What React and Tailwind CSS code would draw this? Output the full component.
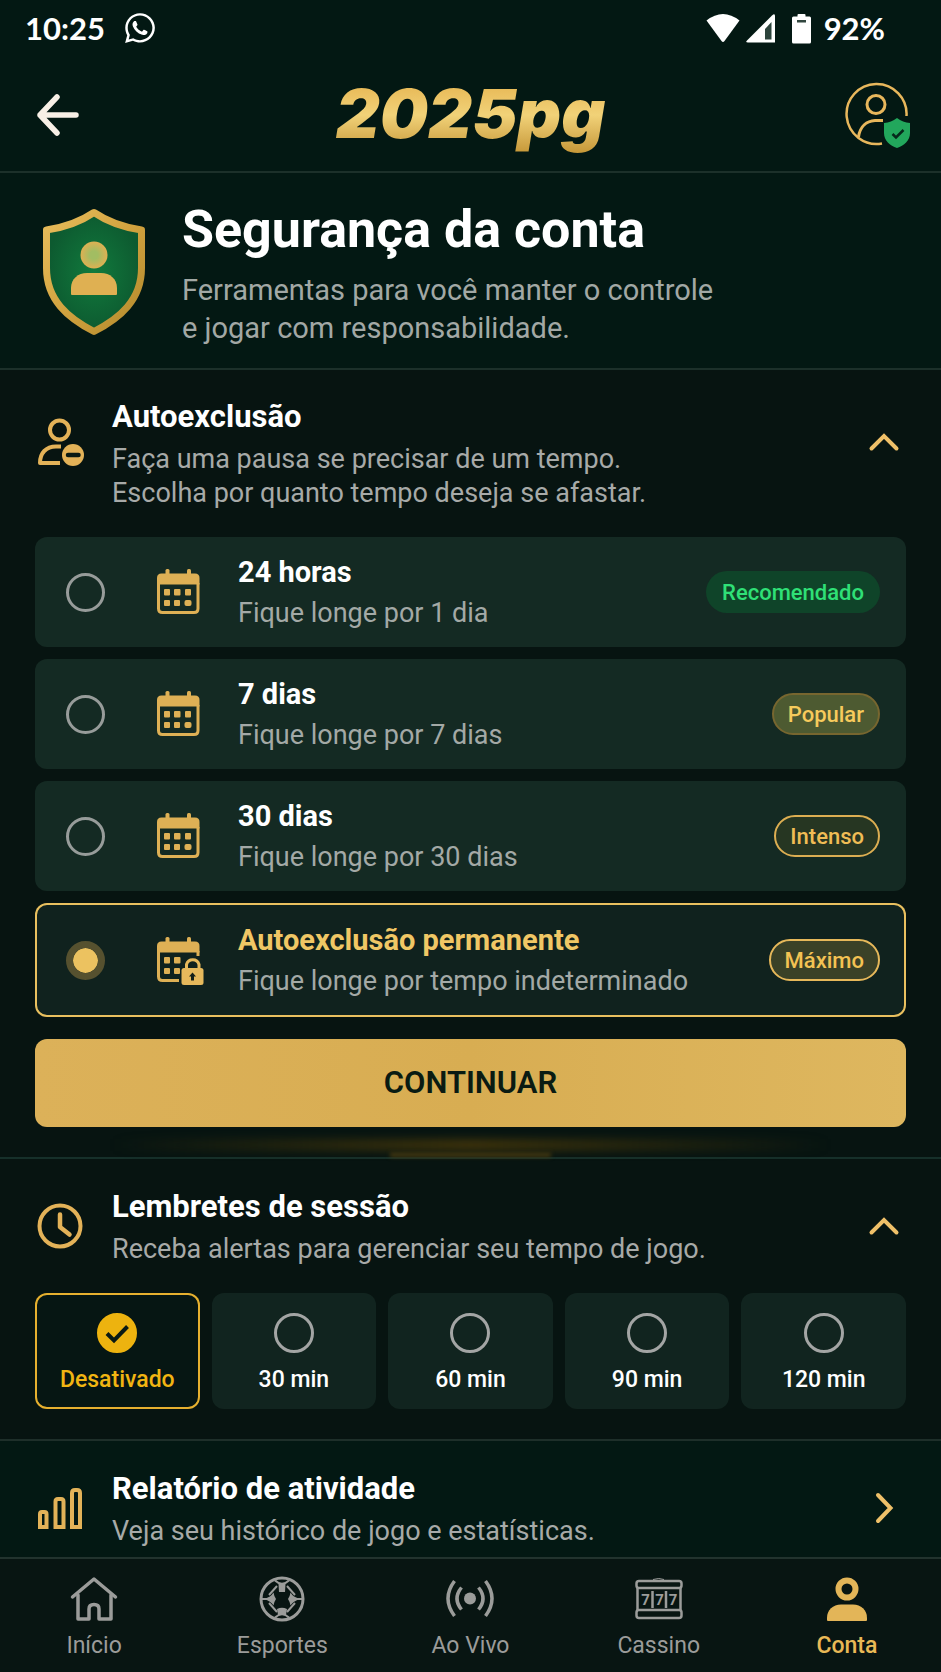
import React, { useState } from "react";
import { FaWhatsapp } from "react-icons/fa";

const exclusionOptions = [
  {
    id: "24h",
    title: "24 horas",
    text: "Fique longe por 1 dia",
    badge: "Recomendado",
    badgeClass: "bg-[#0f4429] text-[#2fe077] px-4"
  },
  {
    id: "7d",
    title: "7 dias",
    text: "Fique longe por 7 dias",
    badge: "Popular",
    badgeClass:
      "bg-[#4d5a31] text-[#f7cb5c] px-[14px] border-2 border-[#77662f]"
  },
  {
    id: "30d",
    title: "30 dias",
    text: "Fique longe por 30 dias",
    badge: "Intenso",
    badgeClass:
      "bg-[#263622] text-[#f0bd55] px-[14px] border-2 border-[#dcae52]"
  },
  {
    id: "permanent",
    title: "Autoexclusão permanente",
    text: "Fique longe por tempo indeterminado",
    badge: "Máximo",
    badgeClass:
      "bg-[#3a4127] text-[#f3c253] px-[14px] border-2 border-[#e6b85a]"
  }
];

const reminders = ["Desativado", "30 min", "60 min", "90 min", "120 min"];

const ShieldIcon = () => (
  <svg className="w-[104px] h-32 shrink-0" viewBox="0 0 104 128" fill="none">
    <defs>
      <linearGradient id="shieldGold" x1="0" y1="0" x2="1" y2="1">
        <stop offset="0" stopColor="#e8bd5c" />
        <stop offset="0.5" stopColor="#d2a33f" />
        <stop offset="1" stopColor="#b28a2c" />
      </linearGradient>
      <radialGradient id="shieldGreen">
        <stop offset="0" stopColor="#117a3d" />
        <stop offset="1" stopColor="#0d5a30" />
      </radialGradient>
      <radialGradient id="shieldHead">
        <stop offset="0.3" stopColor="#a2bd62" />
        <stop offset="1" stopColor="#dfb052" />
      </radialGradient>
    </defs>
    <path
      d="M52 4.500C38 14 22 19.500 4.500 22V60C4.500 92 26 110 52 123.500C78 110 99.500 92 99.500 60V22C82 19.500 66 14 52 4.500Z"
      fill="url(#shieldGreen)"
      stroke="url(#shieldGold)"
      strokeWidth="7"
      strokeLinejoin="round"
    />
    <circle cx="52" cy="47" r="13.500" fill="url(#shieldHead)" />
    <path
      d="M29 86V80C29 71 36 65 45 65H59C68 65 75 71 75 80V86Q75 87 74 87H30Q29 87 29 86Z"
      fill="#dfb052"
    />
  </svg>
);

const AccountIcon = () => (
  <svg className="w-[66px] h-[68px]" viewBox="0 -1 66 68" fill="none">
    <g stroke="#e8b75c" strokeWidth="2.500">
      <path d="M61.500 34A30 30 0 1 0 37 61.500" />
      <circle cx="31" cy="22.500" r="9" strokeWidth="3" />
      <path d="M13.500 55C15 44 22 39 30 38.500H38" strokeWidth="3" />
    </g>
    <path
      d="M52 36C56 39 60 40.500 65 41V51C65 59 59 63.500 52 66C45 63.500 39 59 39 51V41C44 40.500 48 39 52 36Z"
      fill="#22a75c"
    />
    <path d="M47.500 52L51 55.500L58.500 48" stroke="#06281b" strokeWidth="2.500" />
  </svg>
);

const UserMinusIcon = () => (
  <svg className="w-12 h-12" viewBox="0 0 48 48" fill="none">
    <g stroke="#e3b258" strokeWidth="4">
      <circle cx="23.500" cy="12" r="9.500" />
      <path d="M25 28.500H20C10 28.500 4 35 4 45H24" strokeLinejoin="round" />
    </g>
    <circle cx="37" cy="37" r="11" fill="#e3b258" />
    <path d="M32 37H42.500" stroke="#0a1a14" strokeWidth="4.500" strokeLinecap="round" />
  </svg>
);

const ClockIcon = () => (
  <svg className="w-12 h-12" viewBox="0 0 48 48" fill="none">
    <g stroke="#e3b258" strokeWidth="4" strokeLinecap="round" strokeLinejoin="round">
      <circle cx="24" cy="24" r="20.500" />
      <path d="M24 12.500V25L33.500 32.500" strokeWidth="4.500" />
    </g>
  </svg>
);

const ChartIcon = () => (
  <svg className="w-12 h-12" viewBox="0 0 48 48" fill="none">
    <g stroke="#e3b258" strokeWidth="4">
      <path d="M4 43V30Q4 28 6 28H8.500Q10.500 28 10.500 30V43Z" />
      <path d="M19.500 43V17.500Q19.500 15 22 15H25Q27.500 15 27.500 17.500V43Z" />
      <path d="M36 43V9Q36 6 39 6H41Q44 6 44 9V43Z" />
    </g>
  </svg>
);

const CalendarIcon = ({ locked }) => (
  <svg className="w-12 h-[50px] shrink-0" viewBox="0 0 48 50" fill="#deb055">
    <rect x="9.500" y="2" width="4" height="8" rx="1.500" />
    <rect x="31" y="2" width="4" height="8" rx="1.500" />
    <path d="M1 17.500V11Q1 6.500 5.500 6.500H39Q43.500 6.500 43.500 11V17.500Z" />
    <path
      d={
        locked
          ? "M42 16V21M2.500 16V41.500Q2.500 45.500 6.500 45.500H23"
          : "M2.500 16V41.500Q2.500 45.500 6.500 45.500H38Q42 45.500 42 41.500V16"
      }
      fill="none"
      stroke="#deb055"
      strokeWidth="3"
    />
    <rect x="8" y="22" width="6" height="6.500" rx="1" />
    <rect x="18" y="22" width="6.500" height="6.500" rx="1" />
    <rect x="8" y="33" width="6" height="6" rx="1" />
    <rect x="18" y="33" width="6" height="6" rx="1" />
    {locked ? (
      <>
        <path
          d="M30.500 34V29.500A6.500 6.500 0 0 1 43 29.500V34"
          fill="none"
          stroke="#e6b95c"
          strokeWidth="3"
        />
        <rect x="25.500" y="33" width="22" height="17" rx="2.500" fill="#e6b95c" />
        <path d="M36.500 37.500L40 41.500H38V45.500H35V41.500H33Z" fill="#142019" />
      </>
    ) : (
      <>
        <rect x="29" y="22" width="6" height="6.500" rx="1" />
        <rect x="28.500" y="33" width="7" height="6" rx="2" />
      </>
    )}
  </svg>
);

const Chevron = ({ right }) => (
  <svg className="w-9 h-9" viewBox="0 0 36 36" fill="none">
    <path
      d={right ? "M12 5L24.500 18L12 31" : "M5.500 24.500L18 12L30.500 24.500"}
      stroke="#efc069"
      strokeWidth="4"
      strokeLinecap="round"
    />
  </svg>
);

const HomeIcon = () => (
  <svg className="w-12 h-12" viewBox="0 0 48 48" fill="none">
    <g stroke="#9b9c9a" strokeWidth="3.500" strokeLinecap="round" strokeLinejoin="round">
      <path d="M2.500 22L24 4L45.500 22" />
      <path d="M8 20V44H19V34Q19 29.500 24 29.500Q29 29.500 29 34V44H41V20" />
    </g>
  </svg>
);

const BallIcon = () => (
  <svg className="w-12 h-12" viewBox="0 0 48 48" fill="none">
    <circle cx="24" cy="24" r="21" stroke="#9b9c9a" strokeWidth="3" />
    <g stroke="#9b9c9a" strokeWidth="2">
      <path d="M17 5.500Q24 12 31 5.500M17 42.500Q24 36 31 42.500" />
      <path d="M19 11L11 20M29 11L37 20M19 37L11 28M29 37L37 28" />
      <path d="M3.500 24H9M39 24H44.500" />
    </g>
    <g fill="#9b9c9a">
      <path d="M20.500 9H27.500L27 17H21Z" />
      <path d="M6 24Q13 22 15.500 17.500Q16 21 18 24Q16 27 15.500 30.500Q13 26 6 24Z" />
      <path d="M42 24Q35 22 32.500 17.500Q32 21 30 24Q32 27 32.500 30.500Q35 26 42 24Z" />
      <path d="M19 34Q24 31.500 29 34L28 40H20Z" />
    </g>
  </svg>
);

const LiveIcon = () => (
  <svg className="w-12 h-12" viewBox="0 0 48 48" fill="none">
    <circle cx="24" cy="23.500" r="6" fill="#9b9c9a" />
    <g stroke="#9b9c9a" strokeWidth="3.500">
      <path d="M15.500 12.500Q6.500 23.500 15.500 34.500M32.500 12.500Q41.500 23.500 32.500 34.500" />
      <path d="M8.500 6Q-4.500 23.500 8.500 41M39.500 6Q52.500 23.500 39.500 41" />
    </g>
  </svg>
);

const SlotIcon = () => (
  <svg className="w-12 h-12" viewBox="0 0 48 48" fill="none">
    <g stroke="#9b9c9a" strokeWidth="2.500">
      <rect x="1.500" y="6" width="45" height="7" rx="2.500" />
      <path d="M2.500 13V36M45.500 13V36M17.500 16V33M31 16V33" />
      <rect x="1.500" y="35" width="45" height="8" rx="2.500" />
      <path d="M18 4.500Q24 2.500 29 4.500" strokeWidth="1" />
    </g>
    <g
      fill="#9b9c9a"
      fontFamily="Roboto, sans-serif"
      fontWeight="700"
      fontSize="15"
      textAnchor="middle"
    >
      <text x="10.500" y="29.500">7</text>
      <text x="24.500" y="29.500">7</text>
      <text x="38" y="29.500">7</text>
    </g>
  </svg>
);

const AccountNavIcon = () => (
  <svg className="w-12 h-12" viewBox="0 0 48 48" fill="none">
    <circle cx="24" cy="14" r="8.500" stroke="#e3b558" strokeWidth="6" />
    <path
      d="M4 45V43C4 35 10 29.500 18 29.500H30C38 29.500 44 35 44 43V45Q44 46 43 46H5Q4 46 4 45Z"
      fill="#e3b558"
    />
  </svg>
);

const navItems = [
  { label: "Início", icon: HomeIcon },
  { label: "Esportes", icon: BallIcon },
  { label: "Ao Vivo", icon: LiveIcon },
  { label: "Cassino", icon: SlotIcon },
  { label: "Conta", icon: AccountNavIcon, active: true }
];

const StatusBar = () => (
  <div className="flex items-center justify-between h-[58px] pb-0.5 pl-[25px] pr-14 text-white font-[Lato,sans-serif] text-[31px] leading-none font-bold">
    <div className="flex items-center gap-[18px]">
      <span>10:25</span>
      <FaWhatsapp className="w-[34px] h-[34px]" />
    </div>
    <div className="flex items-center gap-3">
      <svg className="w-[106px] h-8" viewBox="0 0 106 32" fill="#fff">
        <path d="M0.500 8.500Q17 -4.500 33.500 8.500L18.500 29Q17 31 15.500 29Z" />
        <path d="M42 30.500Q39 30.500 41 28.500L66 3.500Q69 1 69 4V30.500Z" />
        <path d="M59 17L65.500 10V27.500H59Z" fill="#2c443c" />
        <path d="M86 6Q86 4.500 87.500 4.500H91.500V3Q91.500 2 92.500 2H98.500Q99.500 2 99.500 3V4.500H103.500Q105 4.500 105 6V30Q105 31.500 103.500 31.500H87.500Q86 31.500 86 30Z" />
        <rect x="91" y="8" width="9" height="2.500" fill="#31463f" />
      </svg>
      <span>92%</span>
    </div>
  </div>
);

const SectionHeader = ({ icon, title, children, right, tall }) => {
  const side = tall
    ? "flex items-center shrink-0 h-[90px]"
    : "flex items-center shrink-0 h-[78px]";
  return (
    <button
      type="button"
      className="flex w-full items-start pl-9 pr-[39px] text-left"
    >
      <span className={side}>{icon}</span>
      <span className="ml-7 flex-1">
        <span className="block text-[31px] leading-10 font-bold text-white">
          {title}
        </span>
        <span className="block mt-[5px] text-[27px] leading-[34px] text-[#a7aaa8]">
          {children}
        </span>
      </span>
      <span className={side}>
        <Chevron right={right} />
      </span>
    </button>
  );
};

const ExclusionOption = ({ option, checked, onChange }) => (
  <label
    className={
      checked
        ? "flex items-center pl-[31px] pr-[26px] py-[18px] rounded-xl bg-[#10221e] ring-2 ring-inset ring-[#e9c05f]"
        : "flex items-center pl-[31px] pr-[26px] py-4 rounded-xl bg-[#142a23]"
    }
  >
    <input
      type="radio"
      name="exclusion"
      checked={checked}
      onChange={onChange}
      className="appearance-none w-[39px] h-[39px] shrink-0 rounded-full border-[3px] border-[#979c9a] checked:border-[7px] checked:border-[#56512f] checked:bg-[#ecc260] checked:bg-clip-padding"
    />
    <span className="ml-[51px] mr-[34px]">
      <CalendarIcon locked={option.id === "permanent"} />
    </span>
    <span className="flex-1">
      <span
        className={
          checked
            ? "block text-[29px] leading-[38px] font-bold text-[#f0c765]"
            : "block text-[29px] leading-[38px] font-bold text-white"
        }
      >
        {option.title}
      </span>
      <span className="block mt-1 text-[27px] leading-9 text-[#a3a9a6]">
        {option.text}
      </span>
    </span>
    <span
      className={`flex items-center h-[42px] rounded-full text-[22px] font-medium ${option.badgeClass}`}
    >
      {option.badge}
    </span>
  </label>
);

const ReminderOption = ({ label, checked, onChange }) => (
  <label
    className={
      checked
        ? "flex flex-col items-center pt-5 pb-3 rounded-xl bg-[#061613] ring-2 ring-inset ring-[#e6b02f] text-[#f1b512]"
        : "flex flex-col items-center pt-5 pb-3 rounded-xl bg-[#11241f] text-white"
    }
  >
    <span className="grid">
      <input
        type="radio"
        name="reminder"
        checked={checked}
        onChange={onChange}
        className="appearance-none col-start-1 row-start-1 w-10 h-10 rounded-full border-[3px] border-[#a3a5a4] checked:border-[#edb30f] checked:bg-[#edb30f]"
      />
      {checked && (
        <svg
          className="col-start-1 row-start-1 w-10 h-10 pointer-events-none"
          viewBox="0 0 40 40"
          fill="none"
        >
          <path d="M10 20.500L17 27.500L30.500 13.500" stroke="#0a1a14" strokeWidth="4" />
        </svg>
      )}
    </span>
    <span className="mt-[11px] mb-px text-[23px] leading-8 font-medium">
      {label}
    </span>
  </label>
);

const App = () => {
  const [exclusion, setExclusion] = useState("permanent");
  const [reminder, setReminder] = useState("Desativado");

  return (
    <div className="flex flex-col min-h-screen bg-[#031813] font-[Roboto,sans-serif]">
      <StatusBar />
      <header className="flex items-center justify-between h-[115px] pl-9 pr-[30px] border-b-2 border-[#1c302a]">
        <button type="button" aria-label="Voltar" className="w-[60px]">
          <svg className="w-11 h-11" viewBox="0 0 44 44" fill="none">
            <path
              d="M40 22H4M21 4L4 22L21 40"
              stroke="#f8f0e6"
              strokeWidth="5.500"
              strokeLinecap="round"
              strokeLinejoin="round"
            />
          </svg>
        </button>
        <span className="px-2 pb-1 font-[Inter,sans-serif] text-[68px] leading-[84px] font-black italic bg-linear-to-b from-[#e3ad45] via-[#f1d278] to-[#c08f2c] bg-clip-text text-transparent">
          2025pg
        </span>
        <button type="button" aria-label="Perfil">
          <AccountIcon />
        </button>
      </header>

      <section className="flex items-start pl-[42px] pr-10 pt-[27px] pb-[21px] border-b-2 border-[#1c302a]">
        <div className="mt-2">
          <ShieldIcon />
        </div>
        <div className="ml-9">
          <h1 className="text-[52px] leading-[60px] font-bold text-white">
            Segurança da conta
          </h1>
          <p className="mt-[11px] text-[29px] leading-[38px] text-[#a2a8a5]">
            Ferramentas para você manter o controle
            <br />e jogar com responsabilidade.
          </p>
        </div>
      </section>

      <section className="pt-[27px] pb-[30px] bg-[#071411] border-b-2 border-[#16302a]">
        <SectionHeader icon={<UserMinusIcon />} title="Autoexclusão" tall>
          Faça uma pausa se precisar de um tempo.
          <br />
          Escolha por quanto tempo deseja se afastar.
        </SectionHeader>
        <div className="flex flex-col gap-3 mt-[27px] px-[35px]">
          {exclusionOptions.map(option => (
            <ExclusionOption
              key={option.id}
              option={option}
              checked={exclusion === option.id}
              onChange={() => setExclusion(option.id)}
            />
          ))}
        </div>
        <div className="relative mt-[22px] px-[35px]">
          <div className="absolute inset-x-28 -bottom-6 h-3 bg-linear-to-r from-transparent via-[#3d320b] to-transparent blur-[4px]" />
          <div className="absolute inset-x-[390px] -bottom-[30px] h-1 bg-[#4a3c10] blur-[2px]" />
          <button
            type="button"
            className="relative w-full h-[88px] rounded-xl bg-linear-to-r from-[#dcb159] via-[#d8ad52] to-[#deb75f] text-[31px] font-semibold text-[#0a1b12]"
          >
            CONTINUAR
          </button>
        </div>
      </section>

      <section className="pt-7 pb-[30px] bg-[#071411] border-b-2 border-[#1e2f2a]">
        <SectionHeader icon={<ClockIcon />} title="Lembretes de sessão">
          Receba alertas para gerenciar seu tempo de jogo.
        </SectionHeader>
        <div className="grid grid-cols-5 gap-3 mt-[27px] px-[35px]">
          {reminders.map(label => (
            <ReminderOption
              key={label}
              label={label}
              checked={reminder === label}
              onChange={() => setReminder(label)}
            />
          ))}
        </div>
      </section>

      <section className="flex-1 pt-7 pb-2">
        <SectionHeader icon={<ChartIcon />} title="Relatório de atividade" right>
          Veja seu histórico de jogo e estatísticas.
        </SectionHeader>
      </section>

      <nav className="grid grid-cols-5 pt-4 pb-[10px] bg-[#081512] border-t-2 border-[#22332e]">
        {navItems.map(item => (
          <a
            key={item.label}
            href="#"
            className={
              item.active
                ? "flex flex-col items-center text-[#e9b956] font-medium"
                : "flex flex-col items-center text-[#9b9c9a]"
            }
          >
            <item.icon />
            <span className="mt-[7px] text-[23px] leading-8">{item.label}</span>
          </a>
        ))}
      </nav>
    </div>
  );
};

export default App;
